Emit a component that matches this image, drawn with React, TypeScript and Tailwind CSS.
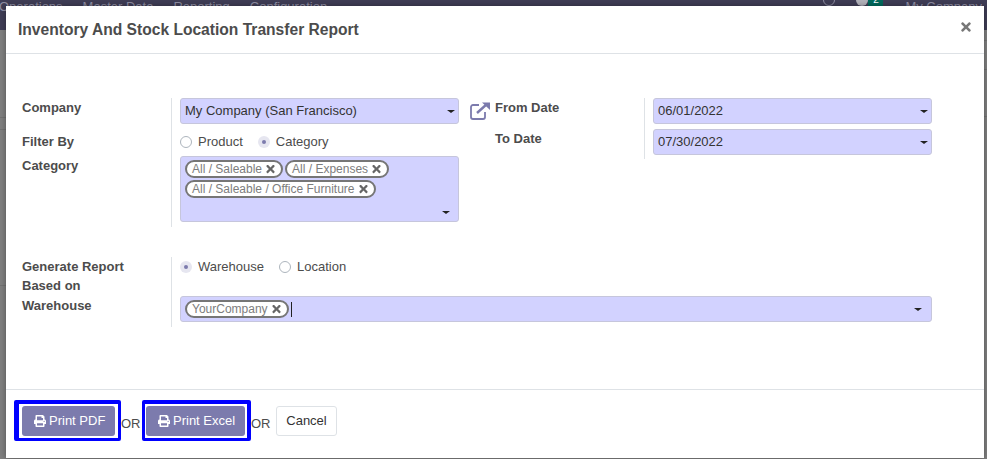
import React from 'react';
import { FaPrint, FaTimes } from 'react-icons/fa';

const Caret = () => (
  <span className="w-0 h-0 border-x-[4px] border-x-transparent border-t-[3.5px] border-t-[#222]" />
);

const Tag = ({ label }: { label: string }) => (
  <span className="inline-flex items-center h-[18px] pl-[5px] pr-[6px] rounded-full border-2 border-[#767676] bg-white text-[12px] text-[#7d7d7d] leading-none">
    {label}
    <FaTimes className="ml-[4px] w-[9px] h-[12px] text-[#666]" />
  </span>
);

const Radio = ({ label, checked }: { label: string; checked?: boolean }) => (
  <span className="flex items-center gap-[6px]">
    {checked ? (
      <span className="w-[12px] h-[12px] rounded-full bg-[#e6e6f0] flex items-center justify-center">
        <span className="w-[4px] h-[4px] rounded-full bg-[#7c7bad]" />
      </span>
    ) : (
      <span className="w-[12px] h-[12px] rounded-full border border-[#adb5bd] bg-white" />
    )}
    <span>{label}</span>
  </span>
);

const SelectField = ({ value }: { value: string }) => (
  <div className="h-[26px] flex items-center justify-between pl-[4px] pr-[3px] bg-[#d2d2ff] border border-[#c6c6dc] rounded-[3px] text-[#333]">
    <span>{value}</span>
    <Caret />
  </div>
);

export default function App() {
  return (
    <div className="relative w-[987px] h-[459px] overflow-hidden bg-[#7f7f7f] font-['Liberation_Sans',Arial,sans-serif] text-[13px] text-[#4c4c4c]">
      {/* page behind the dialog */}
      <div className="h-[30px] bg-[#3f3d56] text-[#8f8ea3] flex items-start justify-between overflow-hidden">
        <div className="flex gap-[20px] -mt-[3px] -ml-[1px]">
          <span>Operations</span>
          <span>Master Data</span>
          <span>Reporting</span>
          <span>Configuration</span>
        </div>
        <div className="flex items-start -mt-[3px] pr-[5px]">
          <span className="w-[12px] h-[12px] mt-[-3px] rounded-full border border-[#8f8ea3]" />
          <span className="ml-[21px] w-[12px] h-[12px] mt-[-3px] rounded-full bg-[#b3b3bb]" />
          <span className="w-[15px] h-[14px] mt-[-5px] bg-[#00695c] text-white text-[10px] leading-[14px] text-center pt-[1px]">2</span>
          <span className="ml-[22px]">My Company</span>
        </div>
      </div>
      <div className="flex justify-between">
        <div className="w-[6px]">
          <div className="h-[88px] border-b border-[#727272]" />
          <div className="h-[12px] border-b border-[#727272]" />
          <div className="h-[156px] border-b border-[#727272]" />
        </div>
        <div className="w-[3px]">
          <div className="h-[11px] border-b border-[#727272]" />
          <div className="h-[29px] border-b border-[#727272]" />
          <div className="h-[47px] border-b border-[#727272]" />
        </div>
      </div>

      <div className="absolute left-[6px] top-[6px] w-[978px] h-[452px] bg-white flex flex-col shadow-[0_0_6px_rgba(0,0,0,0.35)]">
        <header className="h-[48px] shrink-0 border-b border-[#dee2e6] flex items-center justify-between pl-[12px] pr-[11px]">
          <h4 className="text-[15.6px] font-bold text-[#4c4c4c]">Inventory And Stock Location Transfer Report</h4>
          <FaTimes className="w-[14px] h-[14px] mb-[5px] text-[#777]" />
        </header>

        <div className="flex-1 pt-[44px] pl-[16px]">
          <div className="flex">
            <div className="w-[149px] flex flex-col font-bold">
              <span>Company</span>
              <span className="mt-[14px]">Filter By</span>
              <span className="mt-[5px]">Category</span>
            </div>
            <div className="w-[288px] border-l border-[#dee2e6] pl-[8px] pb-[5px]">
              <SelectField value="My Company (San Francisco)" />
              <div className="flex gap-[15px] h-[32px] pt-[4px] items-center">
                <Radio label="Product" />
                <Radio label="Category" checked />
              </div>
              <div className="relative h-[66px] bg-[#d2d2ff] border border-[#c6c6dc] rounded-[3px] pt-[3px] pl-[4px] flex flex-wrap content-start gap-x-[2px] gap-y-[2px]">
                <Tag label="All / Saleable" />
                <Tag label="All / Expenses" />
                <Tag label="All / Saleable / Office Furniture" />
                <span className="absolute right-[8px] bottom-[7px] flex">
                  <Caret />
                </span>
              </div>
            </div>
            <div className="ml-[11px] w-[174px] flex self-start h-[61px]">
              <svg viewBox="0 0 20 18" className="w-[20px] h-[18px] mt-[4px] text-[#7c7bad]" fill="none" stroke="currentColor">
                <path d="M9 3H3a2 2 0 0 0-2 2v10a2 2 0 0 0 2 2h10a2 2 0 0 0 2-2v-5" strokeWidth="1.8" />
                <path d="M7 11l10-9" strokeWidth="2.400" />
                <path d="M12 0.500H20V8z" fill="currentColor" stroke="none" />
              </svg>
              <div className="ml-[5px] flex flex-col font-bold">
                <span>From Date</span>
                <span className="mt-[11px]">To Date</span>
              </div>
            </div>
            <div className="w-[288px] h-[61px] border-l border-[#dee2e6] pl-[8px] flex flex-col gap-[5px]">
              <SelectField value="06/01/2022" />
              <SelectField value="07/30/2022" />
            </div>
          </div>

          <div className="flex mt-[30px]">
            <div className="w-[149px] flex flex-col font-bold leading-[19px]">
              <span>Generate Report</span>
              <span>Based on</span>
              <span className="mt-[1px]">Warehouse</span>
            </div>
            <div className="w-[761px] border-l border-[#dee2e6] pl-[8px] pb-[5px]">
              <div className="flex gap-[15px] h-[20px] items-center">
                <Radio label="Warehouse" checked />
                <Radio label="Location" />
              </div>
              <div className="mt-[19px] h-[26px] flex items-center justify-between pl-[4px] pr-[9px] bg-[#d2d2ff] border border-[#c6c6dc] rounded-[3px]">
                <div className="flex items-center">
                  <Tag label="YourCompany" />
                  <span className="ml-[2px] w-px h-[15px] bg-[#222]" />
                </div>
                <Caret />
              </div>
            </div>
          </div>
        </div>

        <footer className="h-[69px] shrink-0 border-t border-[#dee2e6] flex items-start pt-[10px] pl-[8px]">
          <div className="border-solid border-t-[4px] border-l-[5px] border-r-[3px] border-b-[3px] border-[#0000ff] rounded-[2px] pl-[3px] pr-[3px] py-[2px] bg-white">
            <button className="w-[93px] h-[30px] pl-[12px] flex items-center gap-[3px] bg-[#7c7bad] rounded-[3px] text-white">
              <FaPrint className="w-[12px] h-[12px]" />
              Print PDF
            </button>
          </div>
          <span className="mr-[1.5px] mt-[14px]">OR</span>
          <div className="border-solid border-t-[4px] border-l-[3px] border-r-[4px] border-b-[3px] border-[#0000ff] rounded-[2px] pl-[1px] pr-[2px] py-[2px] bg-white">
            <button className="w-[99px] h-[30px] pl-[12px] flex items-center gap-[3px] bg-[#7c7bad] rounded-[3px] text-white">
              <FaPrint className="w-[12px] h-[12px]" />
              Print Excel
            </button>
          </div>
          <span className="mt-[14px]">OR</span>
          <button className="ml-[5.5px] mt-[6px] h-[30px] w-[61px] bg-white border border-[#dee2e6] rounded-[3px] text-[#333]">Cancel</button>
        </footer>
      </div>
    </div>
  );
}
